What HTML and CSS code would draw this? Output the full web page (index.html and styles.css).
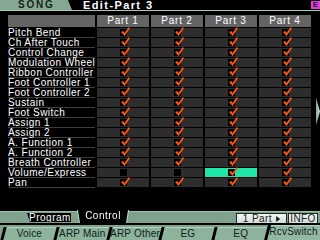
FILE: index.html
```html
<!DOCTYPE html>
<html>
<head>
<meta charset="utf-8">
<link rel="stylesheet" href="styles.css">
</head>
<body>
<div class="screen">
  <header class="topbar">
    <div class="mode-tab">SONG</div>
    <div class="title">Edit-Part 3</div>
    <div class="e-badge">E</div>
  </header>
  <div class="rule"></div>

  <div class="grid">
    <div class="hcell"></div>
    <div class="hcell">Part 1</div>
    <div class="hcell">Part 2</div>
    <div class="hcell">Part 3</div>
    <div class="hcell">Part 4</div>

    <div class="label">Pitch Bend</div>
    <div class="cell"><span class="cb on"></span></div><div class="cell"><span class="cb on"></span></div><div class="cell"><span class="cb on"></span></div><div class="cell"><span class="cb on"></span></div>
    <div class="label">Ch After Touch</div>
    <div class="cell"><span class="cb on"></span></div><div class="cell"><span class="cb on"></span></div><div class="cell"><span class="cb on"></span></div><div class="cell"><span class="cb on"></span></div>
    <div class="label">Control Change</div>
    <div class="cell"><span class="cb on"></span></div><div class="cell"><span class="cb on"></span></div><div class="cell"><span class="cb on"></span></div><div class="cell"><span class="cb on"></span></div>
    <div class="label">Modulation Wheel</div>
    <div class="cell"><span class="cb on"></span></div><div class="cell"><span class="cb on"></span></div><div class="cell"><span class="cb on"></span></div><div class="cell"><span class="cb on"></span></div>
    <div class="label">Ribbon Controller</div>
    <div class="cell"><span class="cb on"></span></div><div class="cell"><span class="cb on"></span></div><div class="cell"><span class="cb on"></span></div><div class="cell"><span class="cb on"></span></div>
    <div class="label">Foot Controller 1</div>
    <div class="cell"><span class="cb on"></span></div><div class="cell"><span class="cb on"></span></div><div class="cell"><span class="cb on"></span></div><div class="cell"><span class="cb on"></span></div>
    <div class="label">Foot Controller 2</div>
    <div class="cell"><span class="cb on"></span></div><div class="cell"><span class="cb on"></span></div><div class="cell"><span class="cb on"></span></div><div class="cell"><span class="cb on"></span></div>
    <div class="label">Sustain</div>
    <div class="cell"><span class="cb on"></span></div><div class="cell"><span class="cb on"></span></div><div class="cell"><span class="cb on"></span></div><div class="cell"><span class="cb on"></span></div>
    <div class="label">Foot Switch</div>
    <div class="cell"><span class="cb on"></span></div><div class="cell"><span class="cb on"></span></div><div class="cell"><span class="cb on"></span></div><div class="cell"><span class="cb on"></span></div>
    <div class="label">Assign 1</div>
    <div class="cell"><span class="cb on"></span></div><div class="cell"><span class="cb on"></span></div><div class="cell"><span class="cb on"></span></div><div class="cell"><span class="cb on"></span></div>
    <div class="label">Assign 2</div>
    <div class="cell"><span class="cb on"></span></div><div class="cell"><span class="cb on"></span></div><div class="cell"><span class="cb on"></span></div><div class="cell"><span class="cb on"></span></div>
    <div class="label">A. Function 1</div>
    <div class="cell"><span class="cb on"></span></div><div class="cell"><span class="cb on"></span></div><div class="cell"><span class="cb on"></span></div><div class="cell"><span class="cb on"></span></div>
    <div class="label">A. Function 2</div>
    <div class="cell"><span class="cb on"></span></div><div class="cell"><span class="cb on"></span></div><div class="cell"><span class="cb on"></span></div><div class="cell"><span class="cb on"></span></div>
    <div class="label">Breath Controller</div>
    <div class="cell"><span class="cb on"></span></div><div class="cell"><span class="cb on"></span></div><div class="cell"><span class="cb on"></span></div><div class="cell"><span class="cb on"></span></div>
    <div class="label">Volume/Express</div>
    <div class="cell"><span class="cb"></span></div><div class="cell"><span class="cb"></span></div><div class="cell sel"><span class="cb on"></span></div><div class="cell"><span class="cb on"></span></div>
    <div class="label">Pan</div>
    <div class="cell"><span class="cb on"></span></div><div class="cell"><span class="cb on"></span></div><div class="cell"><span class="cb on"></span></div><div class="cell"><span class="cb on"></span></div>
  </div>

  <div class="side-arrow"></div>

  <footer class="bottom">
    <div class="tabs-row">
      <div class="tab program">Program</div>
      <div class="control-frame"><div class="tab control">Control</div></div>
      <div class="btn part-btn">1 Part <span class="tri"></span></div>
      <div class="btn info">INFO</div>
    </div>
    <div class="pages-row">
      <div class="page">Voice</div>
      <div class="page">ARP Main</div>
      <div class="page">ARP Other</div>
      <div class="page">EG</div>
      <div class="page">EQ</div>
      <div class="page current">RcvSwitch</div>
    </div>
  </footer>
</div>
</body>
</html>
```

FILE: styles.css
```css
* { box-sizing: border-box; }
html, body { margin: 0; padding: 0; background: #000; }
body { width: 320px; height: 240px; overflow: hidden; font-family: "Liberation Sans", Arial, sans-serif; }

.screen {
  position: relative;
  width: 320px;
  height: 240px;
  background: #000;
  display: flex;
  flex-direction: column;
}

/* ---------- top bar ---------- */
.topbar {
  height: 10px;
  display: flex;
  align-items: flex-start;
}
.mode-tab {
  width: 72px;
  height: 10px;
  background: #86a892;
  clip-path: polygon(0 0, 68px 0, 72px 100%, 0 100%);
  color: #14241a;
  font-weight: bold;
  font-size: 10px;
  line-height: 10px;
  letter-spacing: 1.8px;
  padding-left: 18px;
}
.title {
  margin-left: 11px;
  color: #fff;
  font-weight: bold;
  font-size: 11px;
  line-height: 10px;
  letter-spacing: 1.4px;
}
.e-badge {
  margin-left: auto;
  margin-top: 1px;
  width: 9px;
  height: 8px;
  background: #e040e0;
  color: #301030;
  font-weight: bold;
  font-size: 8px;
  line-height: 8px;
  text-align: center;
}
.rule {
  height: 1px;
  background: #a6ccb6;
}

/* ---------- table ---------- */
.grid {
  margin: 4px 0 0 8px;
  display: grid;
  grid-template-columns: 87px repeat(4, 52px);
  grid-template-rows: 12px repeat(16, 9px);
  column-gap: 2px;
  row-gap: 1px;
}
.hcell {
  background: #646464;
  color: #fff;
  font-size: 10px;
  line-height: 12px;
  text-align: center;
  letter-spacing: 0.8px;
}
.label {
  color: #fff;
  font-size: 10px;
  line-height: 9px;
  letter-spacing: 0.45px;
  white-space: nowrap;
  box-shadow: 0 1px 0 #3e3e3e;
}
.cell {
  background: #2d2d2d;
  display: flex;
  justify-content: center;
  align-items: flex-start;
}
.cell.sel { background: #1ee6a6; }

.cb {
  position: relative;
  width: 7px;
  height: 7px;
  margin-top: 1px;
  margin-left: 1px;
  background: #000;
}
.cb.on::after {
  content: "";
  position: absolute;
  left: 1px;
  top: -2px;
  width: 9px;
  height: 9px;
  background: #ff5616;
  clip-path: polygon(0 55%, 25% 45%, 38% 68%, 88% 0, 100% 14%, 40% 100%);
}

/* ---------- side arrow ---------- */
.side-arrow {
  position: absolute;
  left: 316px;
  top: 98px;
  width: 4px;
  height: 27px;
  background: linear-gradient(90deg, #7fa890, #cfe6d8);
  clip-path: polygon(0 0, 100% 50%, 0 100%);
}

/* ---------- bottom ---------- */
.bottom {
  margin-top: auto;
  height: 29px;
  display: flex;
  flex-direction: column;
}
.tabs-row {
  height: 12px;
  background: #7fa28c;
  display: flex;
  align-items: flex-start;
  border-top: 1px solid #9cbfaa;
}
.tab {
  color: #fff;
  background: #000;
  font-size: 10px;
  line-height: 10px;
  text-align: center;
  letter-spacing: 0.5px;
  white-space: nowrap;
}
.program {
  margin-left: 27px;
  margin-top: 1px;
  width: 44px;
  height: 9px;
  line-height: 9px;
  padding-left: 2px;
  clip-path: polygon(0 0, 100% 0, 100% 100%, 3px 100%);
}
.control-frame {
  margin-left: 7px;
  margin-top: -2px;
  filter: drop-shadow(1px 0 0 #b8d8c4) drop-shadow(-1px 0 0 #b8d8c4);
}
.control {
  width: 50px;
  height: 13px;
  line-height: 11px;
  clip-path: polygon(0 0, 100% 0, calc(100% - 2px) 100%, 2px 100%);
}
.btn {
  margin-top: 1px;
  height: 12px;
  background: linear-gradient(#f4f8f6, #cdd9d3);
  border: 1px solid #1c2a22;
  color: #14201a;
  font-size: 10px;
  line-height: 10px;
  text-align: center;
  letter-spacing: 0.4px;
  white-space: nowrap;
}
.part-btn {
  margin-left: auto;
  width: 51px;
}
.tri {
  display: inline-block;
  width: 4px;
  height: 6px;
  background: #14201a;
  clip-path: polygon(0 0, 100% 50%, 0 100%);
  margin-left: 1px;
}
.info {
  margin-left: 1px;
  margin-right: 2px;
  width: 30px;
}
.pages-row {
  flex: 1;
  display: flex;
  background: #7fa28c;
  border-top: 2px solid #000;
  padding-left: 3px;
}
.page {
  position: relative;
  flex: 1;
  margin-top: 2px;
  background: #8db39c;
  color: #10201a;
  font-size: 10px;
  line-height: 11px;
  text-align: center;
  border-top: 1px solid #b2d2be;
  white-space: nowrap;
  letter-spacing: 0.2px;
}
.page::before {
  content: "";
  position: absolute;
  left: -1px;
  top: -1px;
  bottom: 0;
  width: 3px;
  background: #000;
  transform: skewX(-14deg);
}
.page.current {
  margin-top: 0;
  background: #93b8a1;
}
```
